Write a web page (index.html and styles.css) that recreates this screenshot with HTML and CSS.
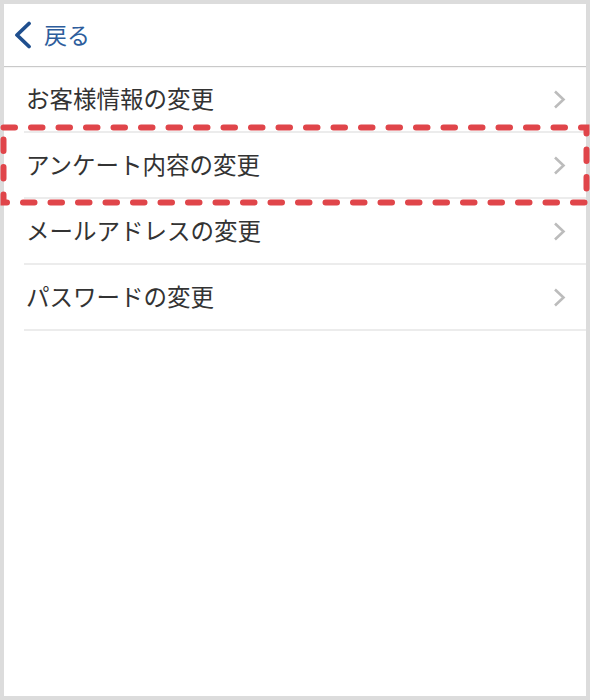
FILE: index.html
```html
<!DOCTYPE html>
<html lang="ja">
<head>
<meta charset="utf-8">
<link rel="stylesheet" href="styles.css">
</head>
<body>
<div class="frame">
  <header class="topbar">
    <a class="back" href="#">
      <svg class="back-icon" width="20" height="28" viewBox="0 0 20 28"><path d="M16 2.5 L4 14 L16 25.5" fill="none" stroke="#1f4f8e" stroke-width="3.8" stroke-linecap="round" stroke-linejoin="round"/></svg>
      <span class="back-label">戻る</span>
    </a>
  </header>
  <ul class="menu">
    <li class="item"><span class="label">お客様情報の変更</span><svg class="chev" width="13" height="19" viewBox="0 0 13 19"><path d="M2 1.5 L10.5 9.5 L2 17.5" fill="none" stroke="#bcbcbc" stroke-width="2.6"/></svg></li>
    <li class="item"><span class="label">アンケート内容の変更</span><svg class="chev" width="13" height="19" viewBox="0 0 13 19"><path d="M2 1.5 L10.5 9.5 L2 17.5" fill="none" stroke="#bcbcbc" stroke-width="2.6"/></svg></li>
    <li class="item"><span class="label">メールアドレスの変更</span><svg class="chev" width="13" height="19" viewBox="0 0 13 19"><path d="M2 1.5 L10.5 9.5 L2 17.5" fill="none" stroke="#bcbcbc" stroke-width="2.6"/></svg></li>
    <li class="item"><span class="label">パスワードの変更</span><svg class="chev" width="13" height="19" viewBox="0 0 13 19"><path d="M2 1.5 L10.5 9.5 L2 17.5" fill="none" stroke="#bcbcbc" stroke-width="2.6"/></svg></li>
  </ul>
  <svg class="highlight" width="590" height="210" viewBox="0 0 590 210"><rect x="3.5" y="127.5" width="583" height="75" fill="none" stroke="#e0454a" stroke-width="6" stroke-dasharray="11.5 16" stroke-linecap="round"/></svg>
</div>
</body>
</html>
```

FILE: styles.css
```css
html, body {
  margin: 0;
  padding: 0;
  background: #dddddd;
}
.frame {
  position: relative;
  box-sizing: border-box;
  width: 590px;
  height: 700px;
  border: 4px solid #dcdcdc;
  background: #ffffff;
  font-family: "Noto Sans CJK JP", "Noto Sans", sans-serif;
}
.topbar {
  height: 62px;
  border-bottom: 1px solid #c9c9c9;
  box-shadow: 0 1px 1px rgba(0,0,0,0.04);
  display: flex;
  align-items: center;
  padding-left: 9px;
}
.back {
  display: flex;
  align-items: center;
  gap: 11px;
  text-decoration: none;
}
.back-icon {
  display: block;
}
.back-label {
  font-size: 23px;
  color: #2d5d9c;
  line-height: 1;
  position: relative;
  top: -1px;
}
.menu {
  list-style: none;
  margin: 0;
  padding: 0;
}
.item {
  box-sizing: border-box;
  height: 66px;
  margin-left: 20px;
  padding-right: 20px;
  border-bottom: 2px solid #ececec;
  display: flex;
  align-items: center;
  justify-content: space-between;
}
.label {
  font-size: 23.5px;
  color: #333333;
  line-height: 1;
  padding-left: 2px;
}
.chev {
  display: block;
}
.highlight {
  position: absolute;
  left: -4px;
  top: -4px;
  pointer-events: none;
}
```
